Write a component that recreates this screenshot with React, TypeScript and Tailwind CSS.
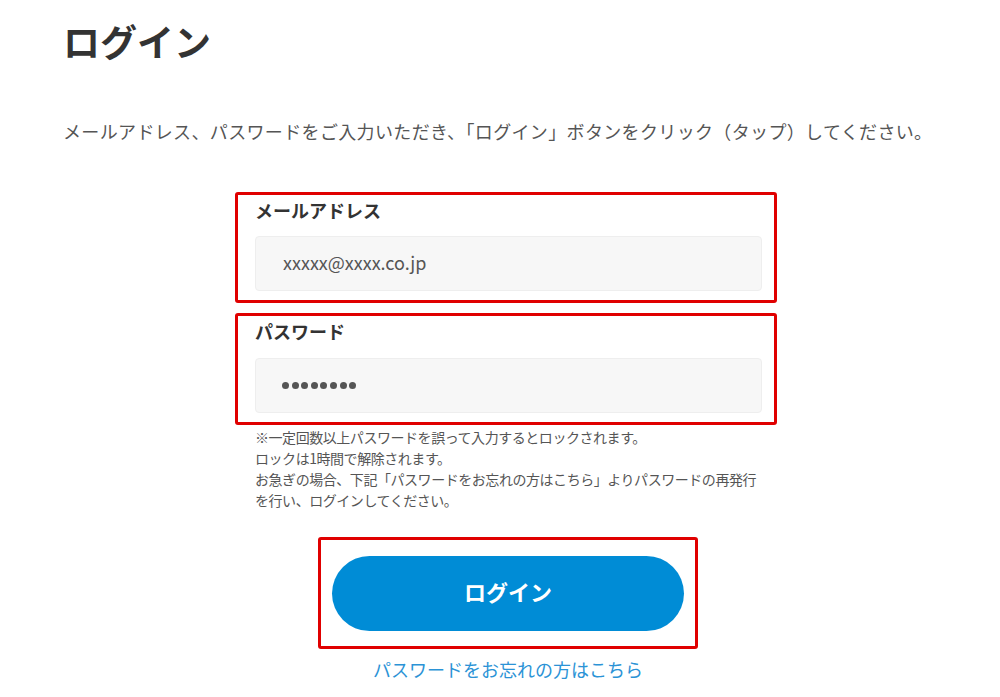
import React from 'react';

const font = { fontFamily: '"Noto Sans CJK JP", "Noto Sans", sans-serif' };

export default function App() {
    return (
        <div className="min-h-[697px] bg-white text-[#333]" style={font}>
            <div className="ml-[63px] w-[890px]">
                {/* タイトル */}
                <h1 className="pt-[17px] text-[37px] font-bold leading-[48px] text-[#333]">ログイン</h1>

                <p className="mt-[54px] whitespace-nowrap text-[18px] leading-[24px] tracking-[0.35px] text-[#555]">
                    メールアドレス、パスワードをご入力いただき、「ログイン」ボタンをクリック（タップ）してください。
                </p>

                {/* メールアドレス */}
                <div className="mt-[49px] ml-[172px] w-[542px] rounded-[3px] border-[3px] border-[#e00000] pl-[17px] pr-[12px] pt-[3px] pb-[9px]">
                    <label className="block text-[18px] font-bold leading-[24px] text-[#333]">メールアドレス</label>
                    <input
                        readOnly
                        value="xxxxx@xxxx.co.jp"
                        className="mt-[14px] block h-[55px] w-full rounded-[4px] border border-[#eeeeee] bg-[#f7f7f7] pl-[27px] pb-[3px] text-[18px] text-[#555] outline-none"
                        style={font}
                    />
                </div>

                {/* パスワード */}
                <div className="mt-[10px] ml-[172px] w-[542px] rounded-[3px] border-[3px] border-[#e00000] pl-[17px] pr-[12px] pt-[3px] pb-[9px]">
                    <label className="block text-[18px] font-bold leading-[24px] text-[#333]">パスワード</label>
                    <div className="mt-[15px] flex h-[55px] w-full items-center rounded-[4px] border border-[#eeeeee] bg-[#f7f7f7] pl-[26px]">
                        <div className="flex gap-[2.6px]">
                            {Array.from({ length: 8 }).map((_, i) => (
                                <span key={i} className="block h-[7px] w-[7px] rounded-full bg-[#555]" />
                            ))}
                        </div>
                    </div>
                </div>

                {/* 注意書き */}
                <p className="mt-[2px] ml-[192px] w-[507px] whitespace-nowrap text-[14px] leading-[21px] tracking-[-0.45px] text-[#555]">
                    ※一定回数以上パスワードを誤って入力するとロックされます。<br />
                    ロックは1時間で解除されます。<br />
                    お急ぎの場合、下記「パスワードをお忘れの方はこちら」よりパスワードの再発行<br />
                    を行い、ログインしてください。
                </p>

                {/* ログインボタン */}
                <div className="mt-[26px] ml-[255px] w-[380px] rounded-[3px] border-[3px] border-[#e00000] px-[11px] pt-[16px] pb-[15px]">
                    <button className="flex h-[75px] w-full items-center justify-center rounded-full bg-[#008cd6] pb-[5px] text-[22px] font-bold text-white" style={font}>
                        ログイン
                    </button>
                </div>

                <div className="mt-[8px] text-center">
                    <a className="text-[18px] leading-[24px] text-[#2b93d6]" href="#">パスワードをお忘れの方はこちら</a>
                </div>
            </div>
        </div>
    );
}
